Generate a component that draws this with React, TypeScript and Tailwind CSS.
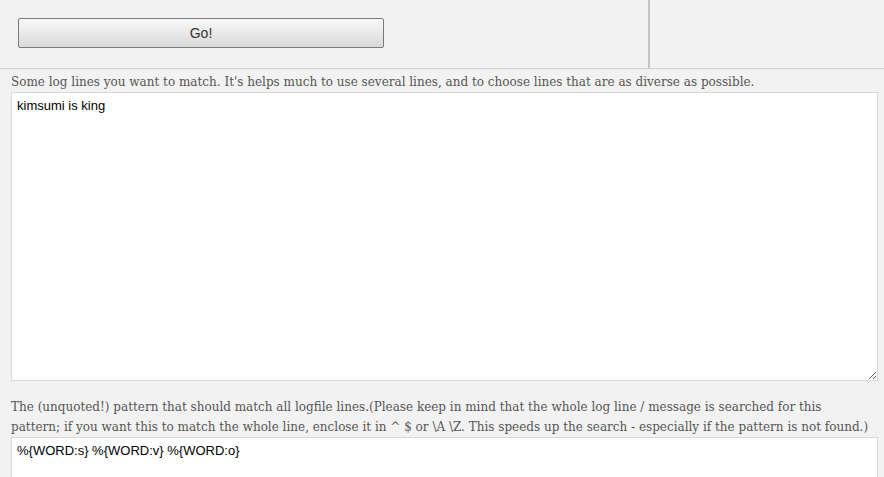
export default function App() {
  return (
    <div className="min-h-screen w-[884px] bg-[#f2f2f2] overflow-hidden">
      <div className="flex h-[69px] border-b border-[#cfcfcf]">
        <div className="w-[650px] border-r-2 border-[#c4c4c4] pt-[18px] pl-[18px]">
          <button className="w-[366px] h-[30px] rounded-[2px] border border-[#7a7a7a] bg-gradient-to-b from-[#f9f9f9] to-[#d9d9d9] text-[14px] text-[#333] font-['Liberation_Sans',Arial,sans-serif]">
            Go!
          </button>
        </div>
        <div className="flex-1" />
      </div>
      <div className="px-[11px] font-['DejaVu_Serif',Georgia,serif] text-[#555] text-[12px]">
        <p className="leading-[19px] pt-[4px]">
          Some log lines you want to match. It's helps much to use several lines, and to choose lines that are as diverse as possible.
        </p>
        <textarea
          className="block w-[867px] h-[289px] bg-white border border-[#d8d8d8] px-[5px] py-[3px] text-[13px] text-black font-['Liberation_Sans',Arial,sans-serif] resize-y outline-none"
          defaultValue="kimsumi is king"
        />
        <p className="leading-[20px] pt-[16px] pr-[4px]">
          The (unquoted!) pattern that should match all logfile lines.(Please keep in mind that the whole log line / message is searched for this pattern; if you want this to match the whole line, enclose it in ^ $ or \A \Z. This speeds up the search - especially if the pattern is not found.)
        </p>
        <textarea
          className="block w-[867px] h-[80px] bg-white border border-[#d8d8d8] px-[5px] py-[3px] text-[13px] text-black font-['Liberation_Sans',Arial,sans-serif] resize-y outline-none"
          defaultValue="%{WORD:s} %{WORD:v} %{WORD:o}"
        />
      </div>
    </div>
  );
}
